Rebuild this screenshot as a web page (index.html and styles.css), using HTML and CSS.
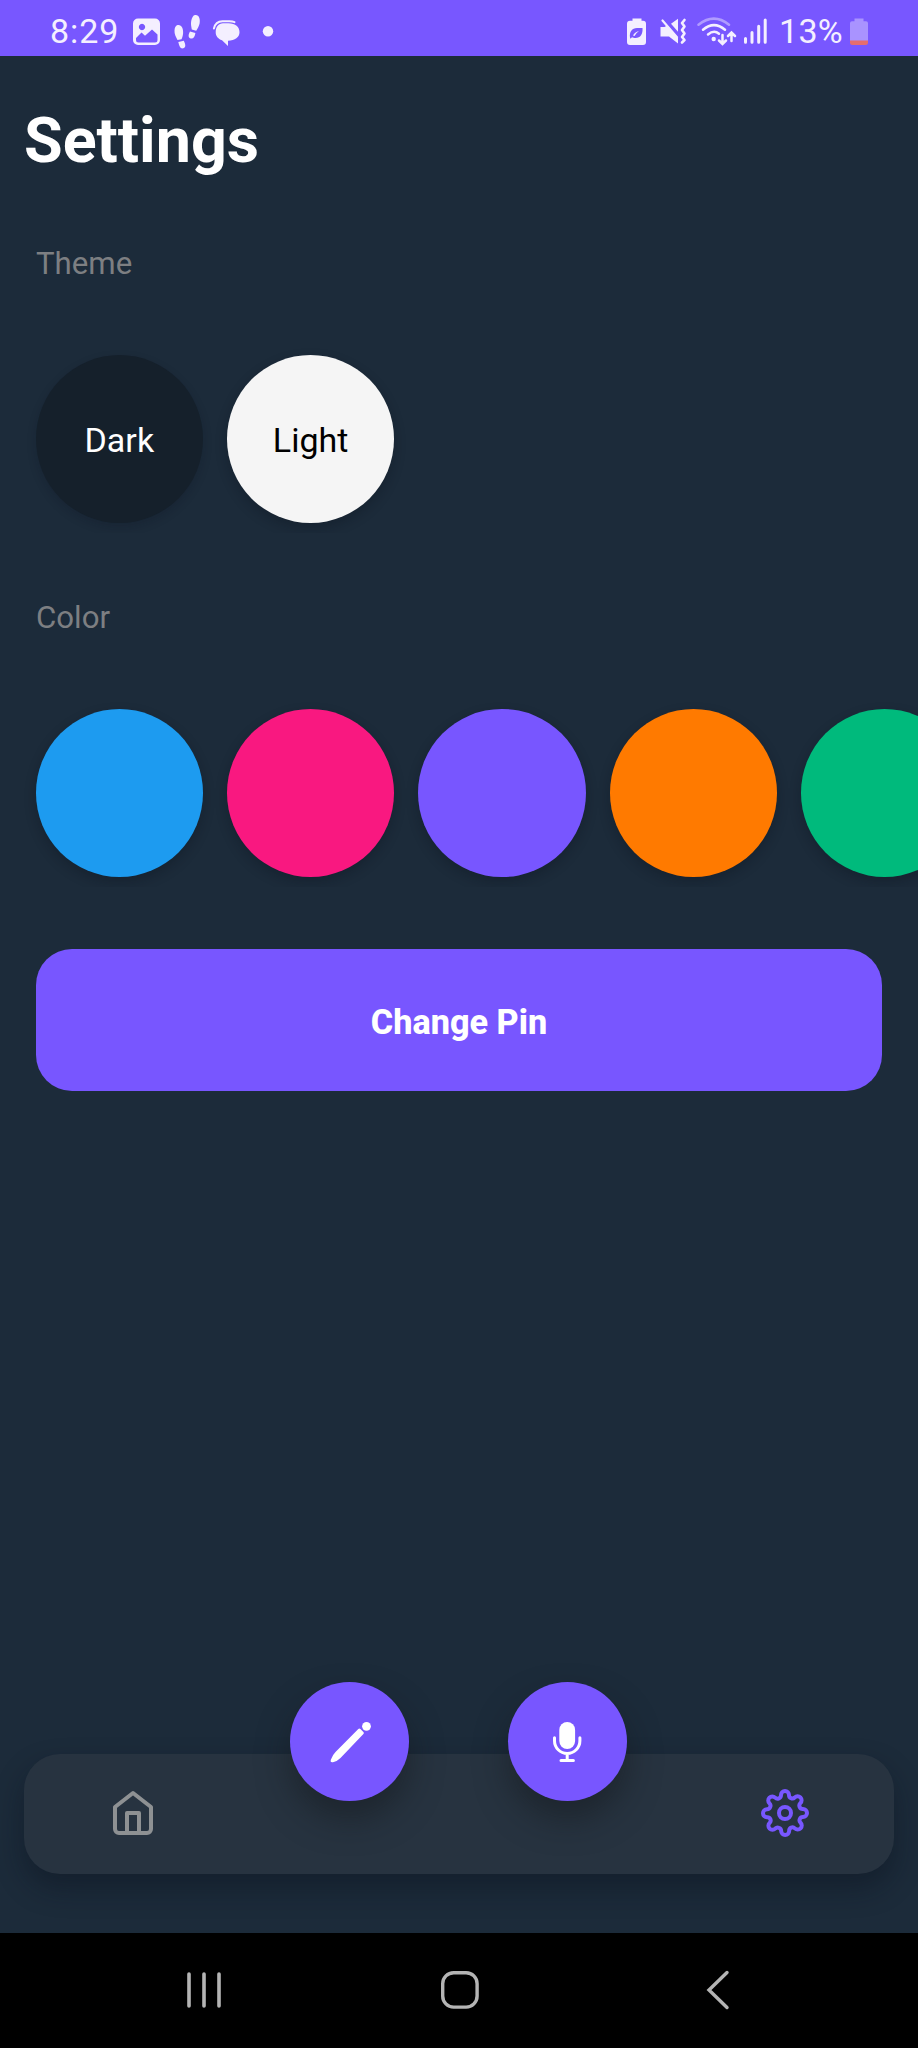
FILE: index.html
```html
<!DOCTYPE html>
<html lang="en">
<head>
<meta charset="utf-8">
<title>Settings</title>
<link rel="stylesheet" href="styles.css">
</head>
<body>
<div class="phone">
  <header class="status">
    <div class="status-left">
      <span class="clock">8:29</span>
      <svg class="notices" width="144" height="40" viewBox="130 12 144 40" fill="#f4efff">
        <path fill-rule="evenodd" d="M138 18.500h17a5 5 0 0 1 5 5v16.500a5 5 0 0 1-5 5h-17a5 5 0 0 1-5-5v-16.500a5 5 0 0 1 5-5zM142 23.800a3.200 3.200 0 1 0 .01 0zM136 38l5.500-5.500 3.500 3.300 7-6.300 5.500 5v5.500q0 2.500-2.500 2.500h-16.500q-2.500 0-2.500-2.500z"/>
        <path d="M177.500 25c4-.8 6 3.500 5.600 8.200-.2 2.500-.8 4.300-1.600 6l-4 .8c-1.500-3-3.300-6-3-9.500.2-2.800 1-5 3-5.500zM178.300 42l5.500-1.200c1.500 3 2.600 6.600-.4 7.500-3.300.8-4.100-2.600-5.100-6.300zM195 15c4-.6 5.500 4 4.600 8.500-.6 3-2.200 5.200-3.400 7.200l-4.400-1.200c-.5-3-1.200-5.500-.6-8.500.6-3.200 1.900-5.700 3.800-6zM190 31.600l5.400 1.400c-.5 3.600-2 6.200-4.800 5.500-3-.9-2-4.300-.6-6.900z"/>
        <path d="M223 23.300h5.500c7 0 11 3.800 11 8.900 0 5-4.500 8.300-11.500 8.600v5.200l-6-5.800c-4-1.400-6.300-4.200-6.300-8 0-5.200 2.800-8.900 7.300-8.900z"/>
        <path d="M213.900 28.500c1-4.500 4-7.300 8.600-7.300h7q3 0 5 .9" fill="none" stroke="#f4efff" stroke-width="2" stroke-linecap="round"/>
        <circle cx="268" cy="31.300" r="5.200"/>
      </svg>
    </div>
    <div class="status-right">
      <svg width="142" height="40" viewBox="626 12 142 40" fill="#f4efff">
        <path fill-rule="evenodd" d="M632.500 18.500h9v2.300h1.500a3 3 0 0 1 3 3V42a3 3 0 0 1-3 3h-13a3 3 0 0 1-3-3V23.800a3 3 0 0 1 3-3h2.500zM630 37.500c-.8-5.500 2-9.500 7-9.500h5.500c.5 6-2 10-7 10-1.500 0-2.500-.3-3.500-.8l-1.500 1.500zM633 35.500q1.500-3.500 6-4.500-3 2-4.500 5z"/>
        <path d="M660.500 27h4l2.500-1.600 11 12.500V43.500l-9-7h-8.500zM671 23.800l7-5v13z"/>
        <path d="M662.500 20.500l14.500 16.700" fill="none" stroke="#f4efff" stroke-width="2.200" stroke-linecap="round"/>
        <path d="M684.500 20l-2.500 3 2.500 3.500-2.500 3.500 2.500 3.500-2.500 3.500 2.500 3-2.500 2.500" fill="none" stroke="#f4efff" stroke-width="2.600" stroke-linejoin="round" stroke-linecap="round"/>
        <g fill="none" stroke="#f4efff" stroke-width="2.500" stroke-linecap="round">
          <path d="M698.500 24.700Q714 12.500 729 24.700" opacity=".45"/>
          <path d="M703 29.700Q714 20.500 725 29.700M708 34.500Q714 29.500 719 33.800"/>
          <path d="M722.500 35v8.500M719 40.500l3.500 3.500 3.500-3.500M731.500 41v-8M728 36l3.500-3.500 3.500 3.500"/>
        </g>
        <circle cx="713.700" cy="39" r="2.200"/>
        <path d="M745.500 38.500v3.800M752 32.500v9.800M758.700 26.300v16M765.200 20v22.300" stroke="#f4efff" stroke-width="3" stroke-linecap="round"/>
      </svg>
      <span class="percent">13%</span>
      <svg class="battery" width="18" height="28" viewBox="0 0 18 28">
        <path d="M4.500.5h9v2.800H16a2 2 0 0 1 2 2V23H0V5.300a2 2 0 0 1 2-2h2.500z" fill="#a993ff"/>
        <path d="M0 22.500h18v2a2.500 2.500 0 0 1-2.500 2.500h-13A2.500 2.500 0 0 1 0 24.500z" fill="#e66d6d"/>
      </svg>
    </div>
  </header>

  <main class="content">
    <h1 class="title">Settings</h1>
    <h2 class="label">Theme</h2>
    <div class="row">
      <div class="swatch dark">Dark</div>
      <div class="swatch light">Light</div>
    </div>
    <h2 class="label color-label">Color</h2>
    <div class="row">
      <div class="swatch blue"></div>
      <div class="swatch pink"></div>
      <div class="swatch purple"></div>
      <div class="swatch orange"></div>
      <div class="swatch green"></div>
    </div>
    <button class="pin">Change Pin</button>
  </main>

  <nav class="tabs">
    <div class="tab home">
      <svg width="48" height="48" viewBox="0 0 24 24" fill="none" stroke="#8e9193" stroke-width="2" stroke-linecap="round" stroke-linejoin="round"><path d="M3 9l9-7 9 7v11a2 2 0 0 1-2 2H5a2 2 0 0 1-2-2z"/><path d="M9 22V12h6v10"/></svg>
    </div>
    <div class="fab">
      <svg width="48" height="48" viewBox="0 0 48 48" fill="#fff"><path d="M32.300 11.100q1.100-1 2.100 0l3 3q1 1 0 2L14.500 39.900Q11.500 43 7 44.200q-3 .7-2.300-2.300Q6.500 37 9.500 34z"/><circle cx="40.500" cy="8.300" r="4.400"/></svg>
    </div>
    <div class="fab">
      <svg width="48" height="48" viewBox="0 0 48 48" fill="none" stroke="#fff" stroke-width="3" stroke-linecap="round"><rect x="16.300" y="4" width="15.800" height="27" rx="7.900" fill="#fff" stroke="none"/><path d="M11.500 19.800v3a12.700 12.700 0 0 0 25.400 0v-3M24.200 36v6M18 42.500h12.400"/></svg>
    </div>
    <div class="tab">
      <svg width="48" height="48" viewBox="0 0 24 24" fill="none" stroke="#7857ff" stroke-width="2" stroke-linecap="round" stroke-linejoin="round"><circle cx="12" cy="12" r="3"/><path d="M19.400 15a1.650 1.650 0 0 0 .33 1.820l.06.06a2 2 0 0 1 0 2.830 2 2 0 0 1-2.830 0l-.06-.06a1.650 1.650 0 0 0-1.820-.33 1.650 1.650 0 0 0-1 1.510V21a2 2 0 0 1-2 2 2 2 0 0 1-2-2v-.09A1.650 1.650 0 0 0 9 19.400a1.650 1.650 0 0 0-1.820.33l-.06.06a2 2 0 0 1-2.830 0 2 2 0 0 1 0-2.830l.06-.06a1.650 1.650 0 0 0 .33-1.820 1.650 1.650 0 0 0-1.510-1H3a2 2 0 0 1-2-2 2 2 0 0 1 2-2h.09A1.650 1.650 0 0 0 4.600 9a1.650 1.650 0 0 0-.33-1.820l-.06-.06a2 2 0 0 1 0-2.830 2 2 0 0 1 2.830 0l.06.06a1.650 1.650 0 0 0 1.820.33H9a1.650 1.650 0 0 0 1-1.510V3a2 2 0 0 1 2-2 2 2 0 0 1 2 2v.09a1.650 1.650 0 0 0 1 1.510 1.650 1.650 0 0 0 1.820-.33l.06-.06a2 2 0 0 1 2.830 0 2 2 0 0 1 0 2.830l-.06.06a1.650 1.650 0 0 0-.33 1.820V9a1.650 1.650 0 0 0 1.510 1H21a2 2 0 0 1 2 2 2 2 0 0 1-2 2h-.09a1.650 1.650 0 0 0-1.510 1z"/></svg>
    </div>
  </nav>

  <footer class="system">
    <svg width="36" height="40" viewBox="0 0 36 40" stroke="#b4b4b4" stroke-width="3.600" stroke-linecap="round"><path d="M3 4v32M18 4v32M33 4v32"/></svg>
    <svg width="40" height="40" viewBox="0 0 40 40" fill="none" stroke="#b4b4b4" stroke-width="3.400"><rect x="2.700" y="2.700" width="34.400" height="34.400" rx="11"/></svg>
    <svg width="24" height="40" viewBox="0 0 24 40" fill="none" stroke="#b4b4b4" stroke-width="3.400" stroke-linecap="round"><path d="M21 2.500L3 20l18 17.500"/></svg>
  </footer>
</div>
</body>
</html>
```
FILE: styles.css
```css
* { box-sizing: border-box; margin: 0; }
body { background: #1c2b3a; font-family: Roboto, sans-serif; color: #fff; }
svg { display: block; flex: none; }
.phone { width: 918px; height: 2048px; display: flex; flex-direction: column; overflow: hidden; }

.status { height: 56px; flex: none; background: #7857ff; display: flex; justify-content: space-between; padding: 12px 50px 4px 50px; color: #f4efff; }
.status-left, .status-right { display: flex; align-items: flex-start; }
.clock, .percent { font-size: 34px; line-height: 39px; letter-spacing: .9px; white-space: nowrap; }
.clock { width: 80px; }
.percent { width: 82px; padding-left: 11px; letter-spacing: .3px; }
.battery { margin-top: 6px; }

.content { flex: 1; display: flex; flex-direction: column; }
.title { margin: 49px 0 0 24px; font-size: 62.800px; line-height: 72px; font-weight: 700; }
.label { margin: 69px 0 0 36px; font-size: 31.200px; line-height: 36px; font-weight: 400; color: #7d7f82; }
.color-label { margin-top: 67px; }
.row { display: flex; gap: 24px; margin-top: 61px; padding: 12px 0 10px 35.700px; overflow: hidden; }
.swatch { width: 167.300px; height: 168px; flex: none; border-radius: 50%; display: flex; align-items: center; justify-content: center; padding-top: 2px; font-size: 34px; box-shadow: 0 5px 12px rgba(10, 16, 28, .3); }
.dark { background: #15202b; color: #fff; box-shadow: 0 4px 10px rgba(10, 16, 28, .2); }
.light { background: #f5f5f5; color: #000; }
.blue { background: #1d9bf0; }
.pink { background: #f91880; }
.purple { background: #7856ff; }
.orange { background: #ff7a00; }
.green { background: #00ba7c; }
.pin { margin: 62px 36px 0; height: 142px; padding: 3px 0 0; border: 0; border-radius: 36px; background: #7856ff; color: #fff; font: 800 34.200px/40px Roboto, sans-serif; }

.tabs { flex: none; height: 120px; margin: 0 24px 59px; border-radius: 36px; background: #273340; display: grid; grid-template-columns: 217px 217.500px 217.500px 1fr; justify-items: center; box-shadow: 0 14px 28px rgba(10, 16, 28, .42); }
.tab, .fab { display: flex; align-items: center; justify-content: center; }
.tab { padding-bottom: 2px; }
.fab { width: 119px; height: 119px; margin-top: -72px; border-radius: 50%; background: #7856ff; box-shadow: 0 18px 32px rgba(20, 24, 27, .5); }

.system { height: 115px; flex: none; background: #000; display: grid; grid-template-columns: 36px 40px 24px; column-gap: 218px; align-items: center; padding: 0 0 2px 186px; }
.system svg:last-child { margin-left: 8px; }
```
